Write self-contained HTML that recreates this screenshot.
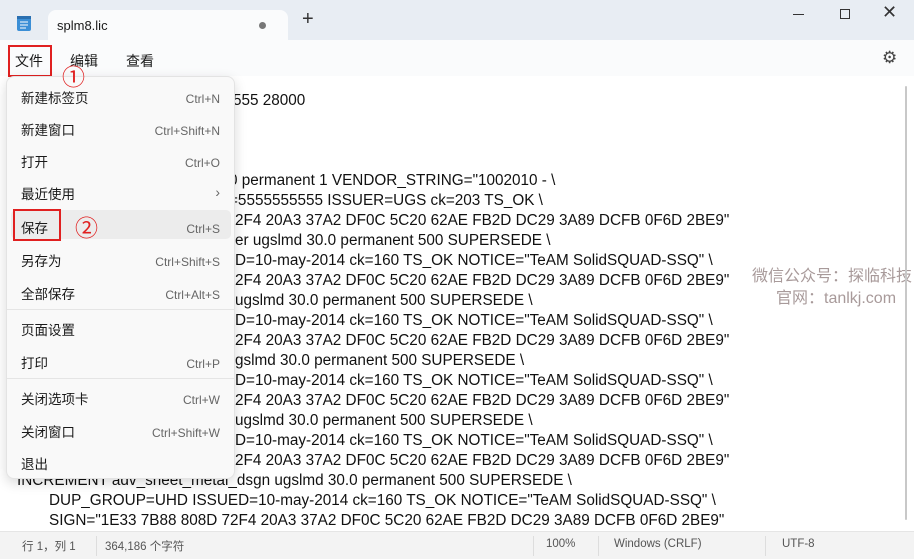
<!DOCTYPE html>
<html><head><meta charset="utf-8"><style>
*{margin:0;padding:0;box-sizing:border-box}
body{width:914px;height:559px;overflow:hidden;background:#fff;font-family:"Liberation Sans","Noto Sans CJK SC",sans-serif;position:relative}
.title{position:absolute;left:0;top:0;width:914px;height:40px;background:#e8edf3}
.tab{position:absolute;left:48px;top:10px;width:240px;height:31px;background:#fafbfc;border-radius:8px 8px 0 0;font-size:13px;color:#1a1a1a}
.menubar{position:absolute;left:0;top:40px;width:914px;height:36px;background:#fafbfc;font-size:14px;color:#1a1a1a}
.t{position:absolute;font-size:15.3px;color:#111;white-space:pre;line-height:20px;font-family:"Liberation Sans",sans-serif}
.menu{position:absolute;left:6px;top:76px;width:229px;height:403px;background:#f9f9f9;border:1px solid #e3e3e3;border-radius:8px;box-shadow:0 4px 12px rgba(0,0,0,.15);font-size:13.5px;color:#1a1a1a}
.mi{position:absolute;left:14px}
.sc{position:absolute;right:14px;font-size:12px;color:#666;margin-top:3px}
.sep{position:absolute;left:0;width:227px;height:1px;background:#e5e5e5}
.status{position:absolute;left:0;top:531px;width:914px;height:28px;background:#f3f3f3;border-top:1px solid #e5e5e5;font-size:11.5px;color:#555}
.status span{position:absolute;top:6px}
.vd{position:absolute;top:4px;width:1px;height:20px;background:#ddd}
.red{position:absolute;border:2px solid #e02020}
.circ{position:absolute;color:#e02020;font-size:23px;line-height:23px}
</style></head><body>
<div class="title">
<svg style="position:absolute;left:16px;top:14px" width="16" height="18"><rect x="1" y="2" width="14" height="15" rx="2" fill="#3b8fd6"/><rect x="1" y="2" width="14" height="3" fill="#2a6fb0"/><g stroke="#fff" stroke-width="1"><line x1="4" y1="8" x2="12" y2="8"/><line x1="4" y1="11" x2="12" y2="11"/><line x1="4" y1="14" x2="10" y2="14"/></g></svg>
<div class="tab"><span style="position:absolute;left:9px;top:8px">splm8.lic</span><span style="position:absolute;left:211px;top:12px;width:7px;height:7px;border-radius:50%;background:#777"></span></div>
<span style="position:absolute;left:302px;top:8px;font-size:20px;color:#333;font-weight:300">+</span>
<span style="position:absolute;left:793px;top:14px;width:11px;height:1px;background:#333"></span>
<span style="position:absolute;left:840px;top:9px;width:10px;height:10px;border:1px solid #333"></span>
<span style="position:absolute;left:882px;top:2px;font-size:18px;color:#333">✕</span>
</div>
<div class="menubar">
<span style="position:absolute;left:15px;top:11px">文件</span>
<span style="position:absolute;left:70px;top:11px">编辑</span>
<span style="position:absolute;left:126px;top:11px">查看</span>
<span style="position:absolute;left:882px;top:8px;font-size:17px;color:#444">⚙</span>
</div>
<div class="red" style="left:8px;top:45px;width:44px;height:32px"></div>
<div class="t" style="left:233px;top:91px">555 28000</div>
<div class="t" style="left:229px;top:171px">0 permanent 1 VENDOR_STRING="1002010 - \</div>
<div class="t" style="left:229px;top:191px">=5555555555 ISSUER=UGS ck=203 TS_OK \</div>
<div class="t" style="left:235px;top:211px">2F4 20A3 37A2 DF0C 5C20 62AE FB2D DC29 3A89 DCFB 0F6D 2BE9"</div>
<div class="t" style="left:235px;top:231px">er ugslmd 30.0 permanent 500 SUPERSEDE \</div>
<div class="t" style="left:235px;top:251px">D=10-may-2014 ck=160 TS_OK NOTICE="TeAM SolidSQUAD-SSQ" \</div>
<div class="t" style="left:235px;top:271px">2F4 20A3 37A2 DF0C 5C20 62AE FB2D DC29 3A89 DCFB 0F6D 2BE9"</div>
<div class="t" style="left:235px;top:291px">ugslmd 30.0 permanent 500 SUPERSEDE \</div>
<div class="t" style="left:235px;top:311px">D=10-may-2014 ck=160 TS_OK NOTICE="TeAM SolidSQUAD-SSQ" \</div>
<div class="t" style="left:235px;top:331px">2F4 20A3 37A2 DF0C 5C20 62AE FB2D DC29 3A89 DCFB 0F6D 2BE9"</div>
<div class="t" style="left:235px;top:351px">gslmd 30.0 permanent 500 SUPERSEDE \</div>
<div class="t" style="left:235px;top:371px">D=10-may-2014 ck=160 TS_OK NOTICE="TeAM SolidSQUAD-SSQ" \</div>
<div class="t" style="left:235px;top:391px">2F4 20A3 37A2 DF0C 5C20 62AE FB2D DC29 3A89 DCFB 0F6D 2BE9"</div>
<div class="t" style="left:235px;top:411px">ugslmd 30.0 permanent 500 SUPERSEDE \</div>
<div class="t" style="left:235px;top:431px">D=10-may-2014 ck=160 TS_OK NOTICE="TeAM SolidSQUAD-SSQ" \</div>
<div class="t" style="left:235px;top:451px">2F4 20A3 37A2 DF0C 5C20 62AE FB2D DC29 3A89 DCFB 0F6D 2BE9"</div>
<div class="t" style="left:17px;top:471px">INCREMENT adv_sheet_metal_dsgn ugslmd 30.0 permanent 500 SUPERSEDE \</div>
<div class="t" style="left:49px;top:491px">DUP_GROUP=UHD ISSUED=10-may-2014 ck=160 TS_OK NOTICE="TeAM SolidSQUAD-SSQ" \</div>
<div class="t" style="left:49px;top:511px">SIGN="1E33 7B88 808D 72F4 20A3 37A2 DF0C 5C20 62AE FB2D DC29 3A89 DCFB 0F6D 2BE9"</div>
<div style="position:absolute;left:752px;top:262px;font-size:16px;color:#a89a9a">微信公众号：探临科技</div>
<div style="position:absolute;left:776px;top:284px;font-size:16px;color:#a89a9a">官网：tanlkj.com</div>
<div style="position:absolute;left:905px;top:86px;width:2px;height:434px;background:#c8c8c8;border-radius:1px"></div>
<div class="menu">
<span class="mi" style="top:10px">新建标签页</span><span class="sc" style="top:12px">Ctrl+N</span>
<span class="mi" style="top:42px">新建窗口</span><span class="sc" style="top:44px">Ctrl+Shift+N</span>
<span class="mi" style="top:74px">打开</span><span class="sc" style="top:76px">Ctrl+O</span>
<span class="mi" style="top:106px">最近使用</span><span class="sc" style="top:104px;font-size:14px">›</span>
<div style="position:absolute;left:4px;top:133px;width:220px;height:29px;background:#ececec;border-radius:5px"></div>
<span class="mi" style="top:140px">保存</span><span class="sc" style="top:142px">Ctrl+S</span>
<span class="mi" style="top:173px">另存为</span><span class="sc" style="top:175px">Ctrl+Shift+S</span>
<span class="mi" style="top:206px">全部保存</span><span class="sc" style="top:208px">Ctrl+Alt+S</span>
<div class="sep" style="top:232px"></div>
<span class="mi" style="top:242px">页面设置</span>
<span class="mi" style="top:275px">打印</span><span class="sc" style="top:277px">Ctrl+P</span>
<div class="sep" style="top:301px"></div>
<span class="mi" style="top:311px">关闭选项卡</span><span class="sc" style="top:313px">Ctrl+W</span>
<span class="mi" style="top:344px">关闭窗口</span><span class="sc" style="top:346px">Ctrl+Shift+W</span>
<span class="mi" style="top:376px">退出</span>
</div>
<div class="red" style="left:13px;top:209px;width:48px;height:32px"></div>
<span class="circ" style="left:62px;top:66px">①</span>
<span class="circ" style="left:75px;top:217px">②</span>
<div class="status">
<span style="left:22px">行 1，列 1</span><div class="vd" style="left:96px"></div>
<span style="left:105px">364,186 个字符</span>
<div class="vd" style="left:533px"></div><span style="left:546px">100%</span>
<div class="vd" style="left:598px"></div><span style="left:614px">Windows (CRLF)</span>
<div class="vd" style="left:765px"></div><span style="left:782px">UTF-8</span>
</div>
</body></html>
